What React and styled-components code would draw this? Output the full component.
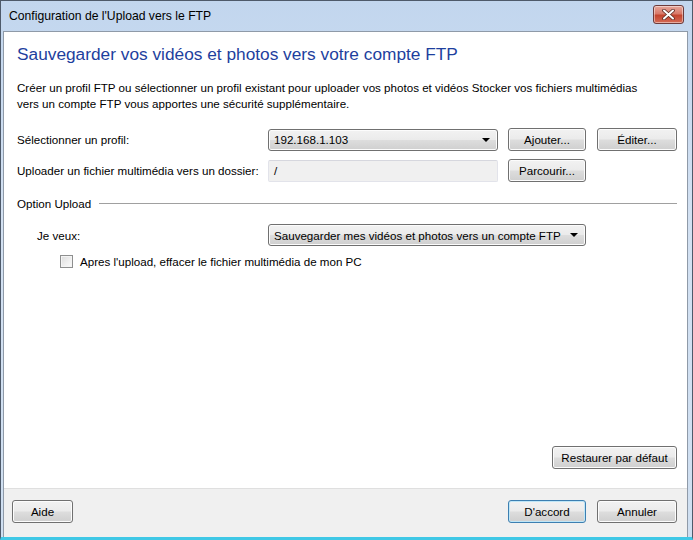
import React from 'react'
import styled, { createGlobalStyle } from 'styled-components'

const Global = createGlobalStyle`
  html, body {
    margin: 0;
    padding: 0;
    background: #ffffff;
  }
  body {
    font-family: "Liberation Sans", Arial, sans-serif;
    font-size: 11.6px;
    color: #000;
  }
`

const Window = styled.div`
  width: 693px;
  height: 540px;
  box-sizing: border-box;
  display: flex;
  flex-direction: column;
  background: linear-gradient(180deg, #c2d6ee 0%, #d3e1f2 40%, #cfdff1 100%);
  border: 1px solid #4e5a6a;
  border-bottom: 3px solid #3fc8e6;
  padding: 0 4px 0 2px;
`

const TitleBar = styled.div`
  height: 30px;
  flex: none;
  display: flex;
  align-items: center;
  justify-content: space-between;
  padding: 0 4px 0 6px;
  & h1 {
    margin: 0;
    font-size: 12.2px;
    font-weight: normal;
    color: #000;
  }
`

const CloseButton = styled.div`
  width: 31px;
  height: 19px;
  margin-bottom: 4px;
  box-sizing: border-box;
  border: 1px solid #6d3b3b;
  border-radius: 3px;
  background: linear-gradient(180deg, #e6a79b 0%, #d97a6a 45%, #c4452f 55%, #d46b56 100%);
  display: flex;
  align-items: center;
  justify-content: center;
  box-shadow: inset 0 0 0 1px rgba(255, 255, 255, 0.45);
`

const Client = styled.div`
  flex: 1;
  display: flex;
  flex-direction: column;
  background: #ffffff;
  border: 1px solid #8f9aa8;
  border-bottom: none;
`

const Main = styled.div`
  flex: 1;
  display: flex;
  flex-direction: column;
  padding: 11px 10px 19px 13px;
`

const Heading = styled.h2`
  margin: 0;
  font-size: 17.3px;
  font-weight: normal;
  line-height: 22px;
  color: #1e3f9e;
`

const Intro = styled.p`
  margin: 15px 0 0;
  line-height: 16px;
`

const Form = styled.div`
  display: grid;
  grid-template-columns: 241px 230px 78px 80px;
  column-gap: 10px;
  row-gap: 8px;
  margin-top: 16px;
  align-items: center;
  & > :nth-child(4n) {
    margin-left: 1px;
  }
`

const Label = styled.span`
  white-space: nowrap;
  padding-left: ${p => p.indent || 0}px;
`

const Button = styled.button`
  height: 23px;
  width: ${p => p.w || 78}px;
  box-sizing: border-box;
  font-family: "Liberation Sans", Arial, sans-serif;
  font-size: 11.6px;
  color: #000;
  border: 1px solid ${p => (p.primary ? '#3c7fb1' : '#707070')};
  border-radius: 3px;
  background: linear-gradient(180deg, #f2f2f2 0%, #ebebeb 48%, #dddddd 52%, #cfcfcf 100%);
  box-shadow: inset 0 0 0 1px ${p => (p.primary ? '#bfe6f7' : '#fcfcfc')};
  padding: 0;
`

const Combo = styled.div`
  height: 22px;
  box-sizing: border-box;
  display: flex;
  align-items: center;
  justify-content: space-between;
  padding: 0 7px 0 5px;
  border: 1px solid #707070;
  border-radius: 3px;
  background: linear-gradient(180deg, #f2f2f2 0%, #ebebeb 48%, #dddddd 52%, #cfcfcf 100%);
  box-shadow: inset 0 0 0 1px #fcfcfc;
  grid-column: ${p => p.span || 'auto'};
  & span {
    white-space: nowrap;
  }
`

const Arrow = styled.i`
  width: 0;
  height: 0;
  border-left: 4px solid transparent;
  border-right: 4px solid transparent;
  border-top: 4px solid #000;
`

const TextInput = styled.div`
  height: 22px;
  box-sizing: border-box;
  border: 1px solid #e2e3ea;
  border-top-color: #d6d7de;
  border-radius: 2px;
  background: #f0f0f0;
  display: flex;
  align-items: center;
  padding-left: 5px;
`

const Section = styled.div`
  display: flex;
  align-items: center;
  gap: 8px;
  margin-top: 15px;
  &::after {
    content: '';
    flex: 1;
    height: 1px;
    background: #a0a0a0;
    border-bottom: 1px solid #fff;
  }
`

const OptionGrid = styled(Form)`
  margin-top: 14px;
`

const CheckRow = styled.label`
  display: flex;
  align-items: center;
  gap: 7px;
  margin: 9px 0 0 43px;
`

const Box = styled.span`
  width: 13px;
  height: 13px;
  box-sizing: border-box;
  border: 1px solid #8e8f8f;
  background: linear-gradient(135deg, #dcdcdc 0%, #f0f0f0 60%, #fbfbfb 100%);
  box-shadow: inset 0 0 0 1px #f4f4f4;
`

const Spacer = styled.div`
  flex: 1;
`

const RightRow = styled.div`
  display: flex;
  justify-content: flex-end;
`

const Footer = styled.div`
  height: 49px;
  flex: none;
  box-sizing: border-box;
  background: #f0f0f0;
  border-top: 1px solid #dfdfdf;
  display: flex;
  align-items: center;
  padding: 0 10px 4px 8px;
  gap: 11px;
  & > :first-child {
    margin-right: auto;
  }
`

export default function App() {
  return (
    <>
      <Global />
      <Window>
        <TitleBar>
          <h1>Configuration de l'Upload vers le FTP</h1>
          <CloseButton>
            <svg width="13" height="11" viewBox="0 0 13 11">
              <path
                d="M2 1.5 L11 9.5 M11 1.5 L2 9.5"
                stroke="#5a2a22"
                strokeWidth="3.6"
                strokeLinecap="round"
              />
              <path
                d="M2 1.5 L11 9.5 M11 1.5 L2 9.5"
                stroke="#ffffff"
                strokeWidth="2"
                strokeLinecap="round"
              />
            </svg>
          </CloseButton>
        </TitleBar>
        <Client>
          <Main>
            <Heading>Sauvegarder vos vidéos et photos vers votre compte FTP</Heading>
            <Intro>
              Créer un profil FTP ou sélectionner un profil existant pour uploader vos photos et vidéos Stocker vos
              fichiers multimédias
              <br />
              vers un compte FTP vous apportes une sécurité supplémentaire.
            </Intro>
            <Form>
              <Label>Sélectionner un profil:</Label>
              <Combo>
                <span>192.168.1.103</span>
                <Arrow />
              </Combo>
              <Button>Ajouter...</Button>
              <Button w={80}>Éditer...</Button>
              <Label>Uploader un fichier multimédia vers un dossier:</Label>
              <TextInput>/</TextInput>
              <Button>Parcourir...</Button>
            </Form>
            <Section>Option Upload</Section>
            <OptionGrid>
              <Label indent={20}>Je veux:</Label>
              <Combo span="span 2">
                <span>Sauvegarder mes vidéos et photos vers un compte FTP</span>
                <Arrow />
              </Combo>
            </OptionGrid>
            <CheckRow>
              <Box />
              Apres l'upload, effacer le fichier multimédia de mon PC
            </CheckRow>
            <Spacer />
            <RightRow>
              <Button w={125}>Restaurer par défaut</Button>
            </RightRow>
          </Main>
          <Footer>
            <Button w={61}>Aide</Button>
            <Button primary>D'accord</Button>
            <Button w={80}>Annuler</Button>
          </Footer>
        </Client>
      </Window>
    </>
  )
}
